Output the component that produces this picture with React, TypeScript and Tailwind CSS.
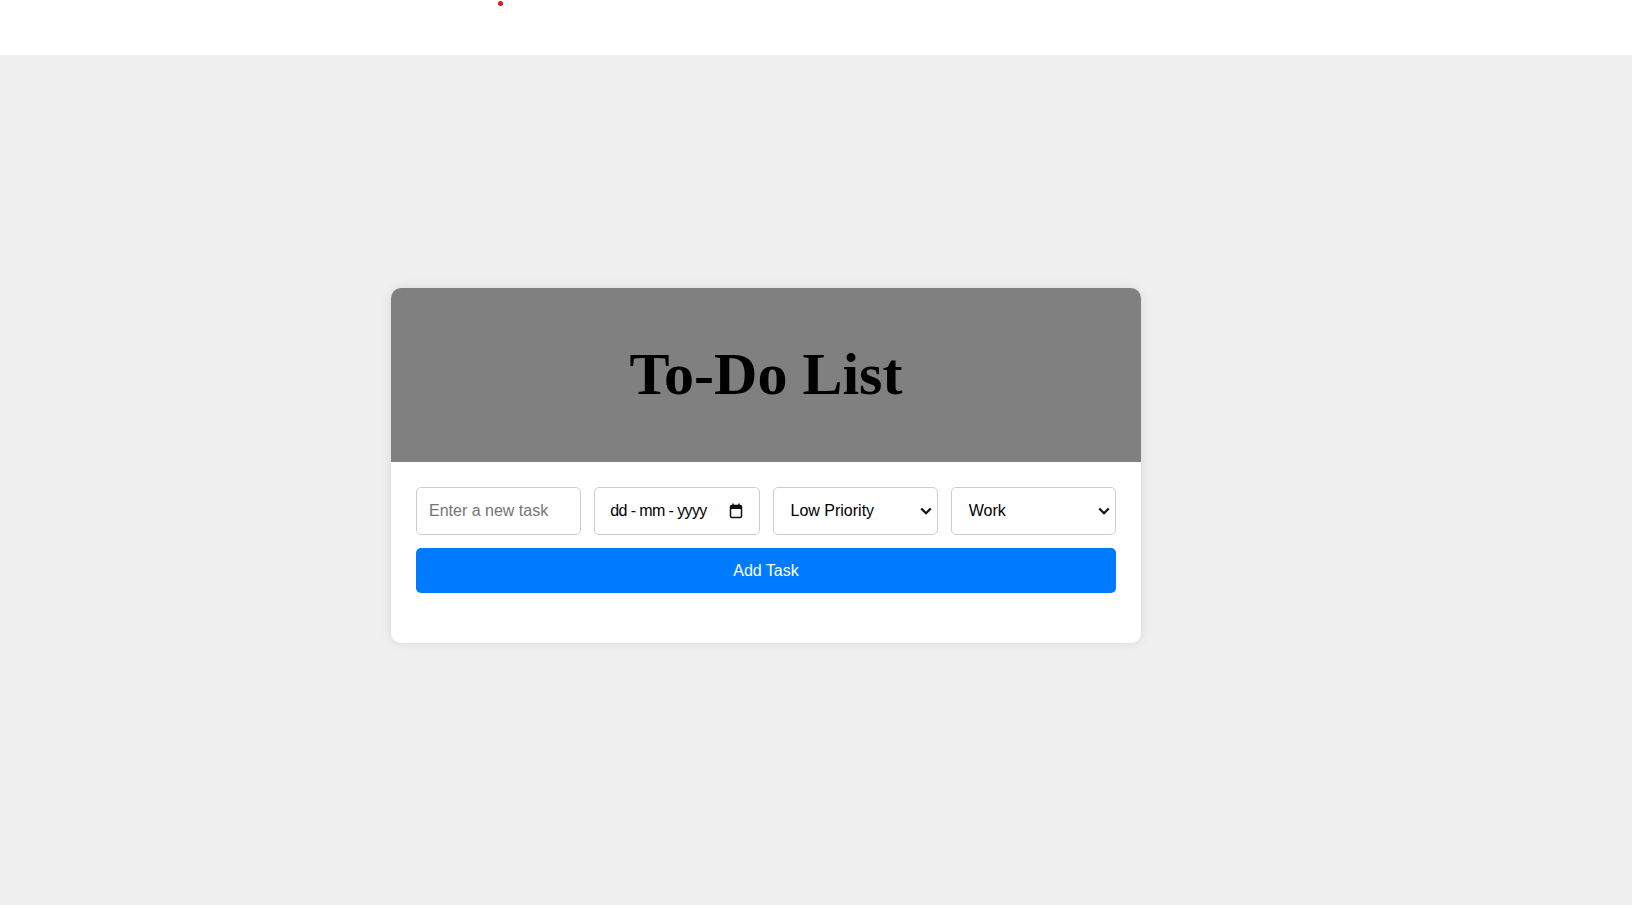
import { useState } from "react";

function Chevron() {
  return (
    <svg
      className="pointer-events-none absolute right-[6px] top-1/2 -translate-y-1/2"
      width="12"
      height="8"
      viewBox="0 0 12 8"
      fill="none"
    >
      <path d="M1.2 1.5 L6 6.2 L10.8 1.5" stroke="#111" strokeWidth="2.2" strokeLinejoin="miter" />
    </svg>
  );
}

function CalendarIcon() {
  return (
    <svg
      className="pointer-events-none absolute right-[17px] top-1/2 -translate-y-1/2"
      width="14"
      height="16"
      viewBox="0 0 14 16"
      fill="none"
    >
      <rect x="1.5" y="2.5" width="11" height="12" rx="1.5" stroke="#111" strokeWidth="1.5" />
      <rect x="1.5" y="2.5" width="11" height="3.5" fill="#111" />
      <path d="M4 0.5 V3 M10 0.5 V3" stroke="#111" strokeWidth="1.5" />
    </svg>
  );
}

export default function App() {
  const [task, setTask] = useState("");
  const [date, setDate] = useState("");
  const [priority, setPriority] = useState("low");
  const [category, setCategory] = useState("work");

  const field =
    "h-[48px] w-full rounded-[5px] border border-[#cccccc] bg-white text-[16px] text-black outline-none";

  return (
    <div className="min-h-[905px] bg-[#f0f0f0] font-['Liberation_Sans',Arial,sans-serif]">
      {/* top strip */}
      <div className="h-[55px] bg-white pt-[1px]">
        <div className="ml-[498px] h-[5px] w-[5px] rounded-full bg-[#e3151f]" />
      </div>

      <div className="ml-[391px] mt-[233px] w-[750px] overflow-hidden rounded-[10px] bg-white shadow-[0_0_12px_rgba(0,0,0,0.1)]">
        <div className="flex h-[174px] items-center justify-center bg-[#808080] pb-[2px]">
          <h1 className="font-['Liberation_Serif','Times_New_Roman',serif] text-[60px] font-bold leading-normal text-black">
            To-Do List
          </h1>
        </div>

        <div className="px-[25px] pb-[50px] pt-[25px]">
          <div className="flex gap-[13px]">
            <div className="min-w-0 flex-1">
              <input
                type="text"
                placeholder="Enter a new task"
                value={task}
                onChange={(e) => setTask(e.target.value)}
                className={field + " px-[12px] placeholder:text-[#757575]"}
              />
            </div>
            <div className="relative min-w-0 flex-1">
              <input
                type="text"
                placeholder="dd - mm - yyyy"
                value={date}
                onChange={(e) => setDate(e.target.value)}
                className={field + " px-[15px] tracking-[-0.6px] placeholder:text-black"}
              />
              <CalendarIcon />
            </div>
            <div className="relative min-w-0 flex-1">
              <select
                value={priority}
                onChange={(e) => setPriority(e.target.value)}
                className={field + " appearance-none pl-[17px]"}
              >
                <option value="low">Low Priority</option>
                <option value="medium">Medium Priority</option>
                <option value="high">High Priority</option>
              </select>
              <Chevron />
            </div>
            <div className="relative min-w-0 flex-1">
              <select
                value={category}
                onChange={(e) => setCategory(e.target.value)}
                className={field + " appearance-none pl-[17px]"}
              >
                <option value="work">Work</option>
                <option value="personal">Personal</option>
                <option value="shopping">Shopping</option>
              </select>
              <Chevron />
            </div>
          </div>

          <button className="mt-[13px] h-[45px] w-full rounded-[5px] bg-[#007bff] text-[16px] text-white">
            Add Task
          </button>
        </div>
      </div>
    </div>
  );
}
